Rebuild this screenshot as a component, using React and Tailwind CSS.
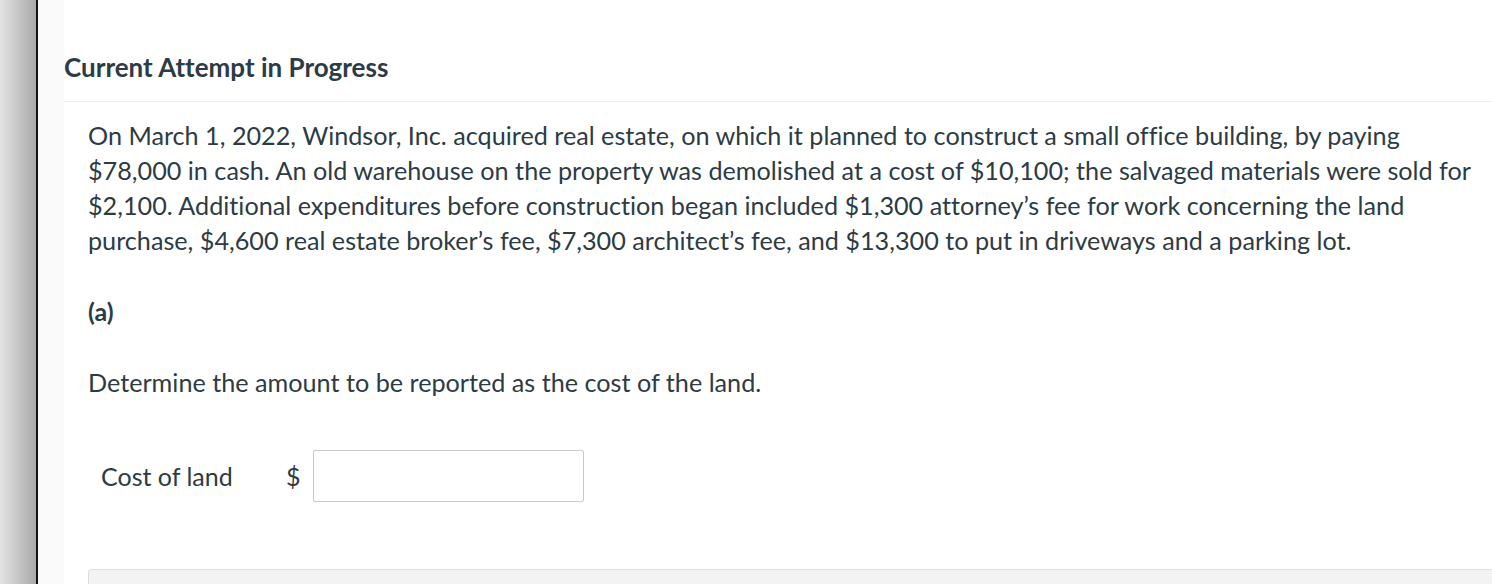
export default function App() {
  return (
    <div className="flex h-[584px] w-[1492px] overflow-hidden bg-white font-['Lato','Open_Sans',sans-serif] text-[#2d3b45] [font-variant-ligatures:none]">
      {/* left rail */}
      <div className="w-[36px] shrink-0 bg-gradient-to-r from-[#e4e4e4] to-[#a9a9a9]" />
      <div className="w-[2px] shrink-0 bg-[#111]" />
      <div className="w-[26px] shrink-0 bg-[#fafafa]" />

      {/* main */}
      <div className="min-w-0 flex-1">
        <div className="border-b border-[#eeeeee] pt-[49px] pb-[16px]">
          <h2 className="text-[26px] font-bold leading-[36px]">Current Attempt in Progress</h2>
        </div>

        <div className="pl-[24px]">
          <p className="mt-[16px] whitespace-nowrap text-[25.2px] leading-[35px]">
            On March 1, 2022, Windsor, Inc. acquired real estate, on which it planned to construct a small office building, by paying
            <br />
            $78,000 in cash. An old warehouse on the property was demolished at a cost of $10,100; the salvaged materials were sold for
            <br />
            $2,100. Additional expenditures before construction began included $1,300 attorney’s fee for work concerning the land
            <br />
            purchase, $4,600 real estate broker’s fee, $7,300 architect’s fee, and $13,300 to put in driveways and a parking lot.
          </p>

          <div className="mt-[36px] text-[25px] font-bold leading-[35px]">(a)</div>

          <p className="mt-[36px] text-[25.2px] leading-[35px]">
            Determine the amount to be reported as the cost of the land.
          </p>

          <div className="mt-[50px] flex items-center pl-[13px]">
            <span className="w-[185px] text-[25px] leading-[35px]">Cost of land</span>
            <span className="w-[27px] text-[25px] leading-[35px]">$</span>
            <input
              type="text"
              className="h-[52px] w-[271px] rounded-[2px] border border-[#c8c8c8] bg-white px-2 text-[20px] outline-none"
            />
          </div>

          <div className="mt-[67px] h-[40px] rounded-tl-[4px] border-t border-l border-[#dddddd] bg-[#f3f3f3]" />
        </div>
      </div>
    </div>
  );
}
